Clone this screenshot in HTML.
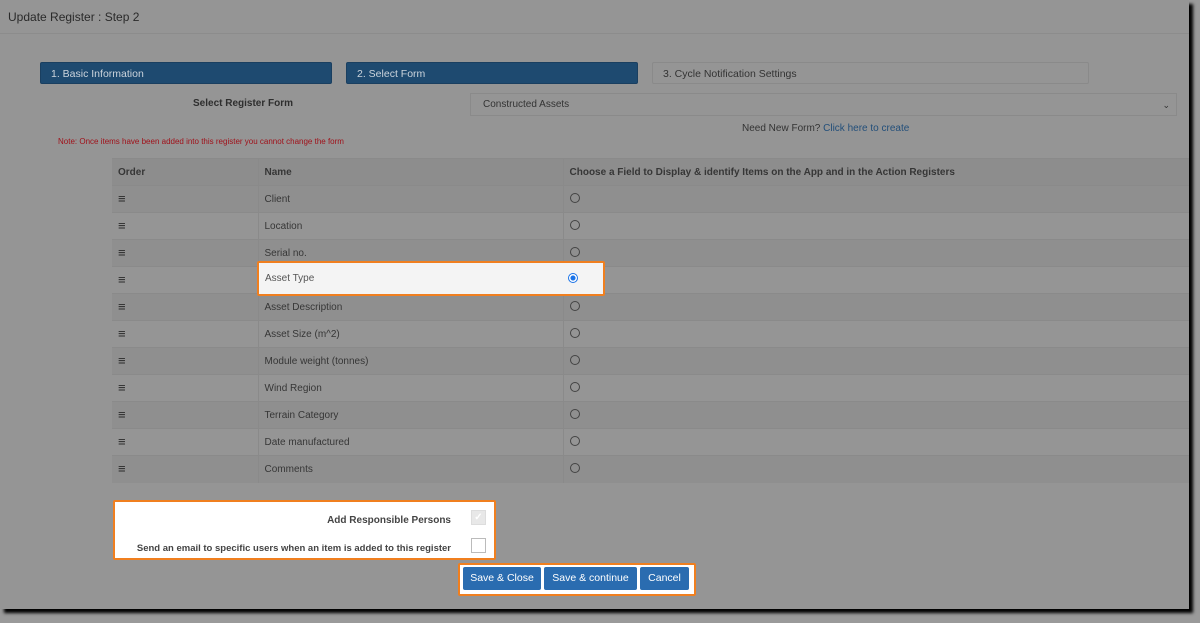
<!DOCTYPE html>
<html><head><style>
body{margin:0;width:1200px;height:623px;background:#9a9a9a;font-family:"Liberation Sans",sans-serif;position:relative;overflow:hidden}
.page{position:absolute;left:0;top:0;width:1189px;height:609px;background:#959595;box-shadow:4px 4px 3px #000}
.abs{position:absolute}
.hdr{left:0;top:0;width:1189px;height:33px;border-bottom:1px solid #8c8c8c;font-size:12px;color:#2a2a2a}
.step{height:22px;font-size:10.5px;line-height:22px;padding-left:10px;box-sizing:border-box;border-radius:2px}
.b{background:#1e4a70;color:#ccd4dc;border:1px solid #1a3f60}
table{border-collapse:collapse;font-size:10px;color:#363636}
td,th{height:27px;padding:0 6px;border-top:1px solid #8a8a8a;text-align:left;box-sizing:border-box}
td+td,th+th{border-left:1px solid #8a8a8a}
th{background:#8d8d8d;font-weight:bold}
tr:nth-child(even) td{background:#8f8f8f}
td:first-child{font-size:13px;font-weight:bold;color:#2a2a2a;line-height:10px;vertical-align:middle}
.rad{display:inline-block;width:8px;height:8px;border:1px solid #444;border-radius:50%;margin-left:0}
.btn{background:#2a6cb0;color:#fff;font-size:10.5px;height:23px;line-height:23px;text-align:center;border-radius:2px;top:567px}
</style></head><body>
<div class="page">
<div class="abs hdr"><span style="position:absolute;left:8px;top:10px">Update Register : Step 2</span></div>
<div class="abs step b" style="left:40px;top:62px;width:292px">1. Basic Information</div>
<div class="abs step b" style="left:346px;top:62px;width:292px">2. Select Form</div>
<div class="abs step" style="left:652px;top:62px;width:437px;border:1px solid #8a8a8a;color:#333">3. Cycle Notification Settings</div>
<div class="abs" style="left:193px;top:98px;font-size:10px;font-weight:bold;color:#2e2e2e">Select Register Form</div>
<div class="abs" style="left:470px;top:93px;width:707px;height:23px;border:1px solid #8a8a8a;box-sizing:border-box;font-size:10px;color:#333;line-height:22px;padding-left:12px">Constructed Assets<span style="position:absolute;right:6px;font-size:9px">&#8964;</span></div>
<div class="abs" style="left:742px;top:123px;font-size:10px;color:#333">Need New Form? <span style="color:#234f7a">Click here to create</span></div>
<div class="abs" style="left:58px;top:137px;font-size:8px;color:#a0111a">Note: Once items have been added into this register you cannot change the form</div>
<table class="abs" style="left:112px;top:158px;width:1077px">
<tr><th style="width:146px">Order</th><th style="width:305px">Name</th><th>Choose a Field to Display &amp; identify Items on the App and in the Action Registers</th></tr>
<tr><td>&#8801;</td><td>Client</td><td><span class="rad"></span></td></tr>
<tr><td>&#8801;</td><td>Location</td><td><span class="rad"></span></td></tr>
<tr><td>&#8801;</td><td>Serial no.</td><td><span class="rad"></span></td></tr>
<tr><td>&#8801;</td><td>Asset Type</td><td><span class="rad"></span></td></tr>
<tr><td>&#8801;</td><td>Asset Description</td><td><span class="rad"></span></td></tr>
<tr><td>&#8801;</td><td>Asset Size (m^2)</td><td><span class="rad"></span></td></tr>
<tr><td>&#8801;</td><td>Module weight (tonnes)</td><td><span class="rad"></span></td></tr>
<tr><td>&#8801;</td><td>Wind Region</td><td><span class="rad"></span></td></tr>
<tr><td>&#8801;</td><td>Terrain Category</td><td><span class="rad"></span></td></tr>
<tr><td>&#8801;</td><td>Date manufactured</td><td><span class="rad"></span></td></tr>
<tr><td>&#8801;</td><td>Comments</td><td><span class="rad"></span></td></tr>
</table>
<div class="abs" style="left:257px;top:261px;width:344px;height:31px;background:#f4f4f4;border:2px solid #f07f1f;border-radius:2px;font-size:10px;color:#555">
<span style="position:absolute;left:6px;top:10px">Asset Type</span>
<span style="position:absolute;left:309px;top:10px;width:8px;height:8px;border:1px solid #1a73e8;border-radius:50%;background:radial-gradient(#1a73e8 40%,#fff 50%)"></span>
</div>
<div class="abs" style="left:113px;top:500px;width:379px;height:56px;background:#fff;border:2px solid #f07f1f;border-radius:2px;font-size:10px;font-weight:bold;color:#444;white-space:nowrap">
<span style="position:absolute;right:43px;top:13px">Add Responsible Persons</span>
<span style="position:absolute;left:356px;top:8px;width:13px;height:13px;background:#e8e8e8;border:1px solid #ddd;color:#fff;font-size:10px;text-align:center;line-height:13px">&#10003;</span>
<span style="position:absolute;right:43px;top:41px;font-size:9.5px">Send an email to specific users when an item is added to this register</span>
<span style="position:absolute;left:356px;top:36px;width:13px;height:13px;border:1px solid #bbb"></span></div>
<div class="abs" style="left:458px;top:563px;width:234px;height:29px;background:#fff;border:2px solid #f07f1f;border-radius:2px"></div>
<div class="abs btn" style="left:463px;width:78px">Save &amp; Close</div>
<div class="abs btn" style="left:544px;width:93px">Save &amp; continue</div>
<div class="abs btn" style="left:640px;width:49px">Cancel</div>
</div>
</body></html>
